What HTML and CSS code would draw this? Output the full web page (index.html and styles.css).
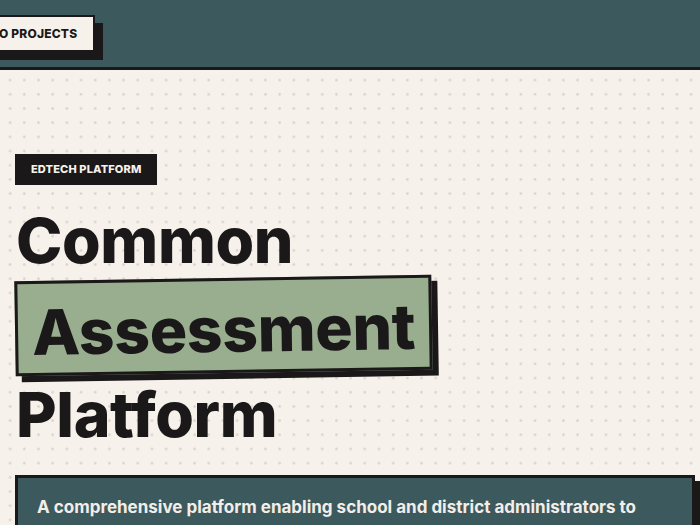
FILE: index.html
```html
<!DOCTYPE html>
<html lang="en">
<head>
    <meta charset="UTF-8">
    <meta name="viewport" content="width=device-width, initial-scale=1.0">
    <title>Common Assessment Platform</title>
    <link rel="stylesheet" href="styles.css">
</head>
<body>
    <header class="topbar">
        <a class="back-btn" href="#">Back to Projects</a>
    </header>

    <main class="hero">
        <span class="tag">EdTech Platform</span>

        <h1 class="title">
            <span class="title-line">Common</span>
            <span class="title-box">Assessment</span>
            <span class="title-line">Platform</span>
        </h1>

        <div class="summary">
            <p>A comprehensive platform enabling school and district administrators to create, deliver and analyse common assessments across classrooms.</p>
        </div>
    </main>
</body>
</html>
```

FILE: styles.css
```css
body {
    font-family: Inter, "Noto Sans", sans-serif;
    background-color: #f7f1eb;
    color: #1b1819;
    margin: 0;
    overflow: hidden;
}

/* top bar */
.topbar {
    height: 67px;
    background-color: #3c5a5e;
    border-bottom: 3px solid #1b1819;
    display: flex;
    align-items: center;
}
.back-btn {
    margin-left: -65px;
    padding: 9px 16px;
    background-color: #f7f1eb;
    border: 2px solid #1b1819;
    box-shadow: 8px 8px 0 #1b1819;
    color: #1b1819;
    font-size: 12px;
    font-weight: 800;
    letter-spacing: 0.2px;
    text-transform: uppercase;
    text-decoration: none;
    line-height: 15px;
}

/* hero with dotted paper */
.hero {
    padding: 84px 5px 40px 15px;
    background-image: radial-gradient(circle, #ded5cc 1px, transparent 1.6px);
    background-size: 14.2px 14.2px;
    background-position: 3px 3px;
    min-height: 500px;
}
.tag {
    display: inline-block;
    padding: 8px 16px;
    background-color: #1b1819;
    color: #f7f1eb;
    font-size: 11px;
    font-weight: 800;
    letter-spacing: 0.15px;
    text-transform: uppercase;
    line-height: 15px;
}

.title {
    margin: 22px 0 0;
    display: flex;
    flex-direction: column;
    align-items: flex-start;
    font-size: 62.5px;
    font-weight: 800;
    line-height: 66px;
    letter-spacing: -0.4px;
}
.title-line {
    padding-left: 1px;
}
.title-box {
    margin: 5px 0 8px;
    padding: 17px 14px 10px;
    line-height: 62px;
    background-color: #98ae8e;
    border: 3px solid #1b1819;
    box-shadow: 6px 6px 0 #1b1819;
    transform: rotate(-0.9deg);
}

.summary {
    margin-top: 28px;
    padding: 14px 19px;
    background-color: #3c5a5e;
    border: 3px solid #1b1819;
    box-shadow: 6px 6px 0 #1b1819;
}
.summary p {
    margin: 0;
    color: #f3eee8;
    font-size: 17px;
    font-weight: 700;
    line-height: 30px;
}
```
